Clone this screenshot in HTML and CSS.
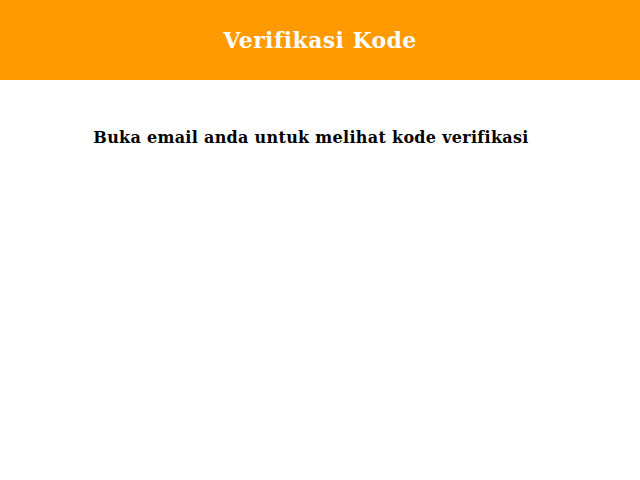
FILE: index.html
```html
<!DOCTYPE html>
<html>
<head>
<meta charset="utf-8">
<link rel="stylesheet" href="styles.css">
</head>
<body>
<header class="topbar"><h1 class="title">Verifikasi Kode</h1></header>
<main class="content"><p class="message">Buka email anda untuk melihat kode verifikasi</p></main>
</body>
</html>
```
FILE: styles.css
```css
html, body { margin: 0; padding: 0; background: #fff; }
body { font-family: "DejaVu Serif", serif; }
.topbar {
  height: 80px;
  background: #ff9900;
  display: flex;
  align-items: center;
  justify-content: center;
}
.title { margin: 0; color: #fff; font-size: 22px; font-weight: bold; letter-spacing: 0.4px; }
.content { padding-top: 48px; padding-right: 18px; text-align: center; }
.message { margin: 0; font-size: 16px; font-weight: bold; color: #000; letter-spacing: 0.3px; }
```
